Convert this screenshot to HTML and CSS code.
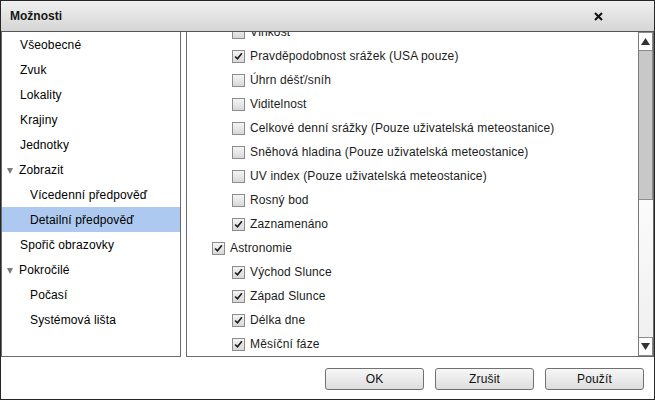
FILE: index.html
```html
<!DOCTYPE html>
<html>
<head>
<meta charset="utf-8">
<link rel="stylesheet" href="styles.css">
</head>
<body>
<div class="window">
  <div class="titlebar">
    <span class="title">Možnosti</span>
    <svg class="close" width="9" height="9" viewBox="0 0 9 9"><path d="M1 1L8 8M8 1L1 8" stroke="#111" stroke-width="2" fill="none"/></svg>
  </div>
  <div class="main">
    <div class="nav">
      <div class="nav-item">Všeobecné</div>
      <div class="nav-item">Zvuk</div>
      <div class="nav-item">Lokality</div>
      <div class="nav-item">Krajiny</div>
      <div class="nav-item">Jednotky</div>
      <div class="nav-item group"><span class="tri"></span>Zobrazit</div>
      <div class="nav-item child">Vícedenní předpověď</div>
      <div class="nav-item child selected">Detailní předpověď</div>
      <div class="nav-item">Spořič obrazovky</div>
      <div class="nav-item group"><span class="tri"></span>Pokročilé</div>
      <div class="nav-item child">Počasí</div>
      <div class="nav-item child">Systémová lišta</div>
    </div>
    <div class="content">
      <div class="list">
        <div class="row sub first"><span class="cb"></span>Vlhkost</div>
        <div class="row sub"><span class="cb on"><svg viewBox="0 0 13 13"><path d="M2.5 6.5L5.3 9.3L10.5 2.8"/></svg></span>Pravděpodobnost srážek (USA pouze)</div>
        <div class="row sub"><span class="cb"></span>Úhrn déšť/sníh</div>
        <div class="row sub"><span class="cb"></span>Viditelnost</div>
        <div class="row sub"><span class="cb"></span>Celkové denní srážky (Pouze uživatelská meteostanice)</div>
        <div class="row sub"><span class="cb"></span>Sněhová hladina (Pouze uživatelská meteostanice)</div>
        <div class="row sub"><span class="cb"></span>UV index (Pouze uživatelská meteostanice)</div>
        <div class="row sub"><span class="cb"></span>Rosný bod</div>
        <div class="row sub"><span class="cb on"><svg viewBox="0 0 13 13"><path d="M2.5 6.5L5.3 9.3L10.5 2.8"/></svg></span>Zaznamenáno</div>
        <div class="row top"><span class="cb on"><svg viewBox="0 0 13 13"><path d="M2.5 6.5L5.3 9.3L10.5 2.8"/></svg></span>Astronomie</div>
        <div class="row sub"><span class="cb on"><svg viewBox="0 0 13 13"><path d="M2.5 6.5L5.3 9.3L10.5 2.8"/></svg></span>Východ Slunce</div>
        <div class="row sub"><span class="cb on"><svg viewBox="0 0 13 13"><path d="M2.5 6.5L5.3 9.3L10.5 2.8"/></svg></span>Západ Slunce</div>
        <div class="row sub"><span class="cb on"><svg viewBox="0 0 13 13"><path d="M2.5 6.5L5.3 9.3L10.5 2.8"/></svg></span>Délka dne</div>
        <div class="row sub"><span class="cb on"><svg viewBox="0 0 13 13"><path d="M2.5 6.5L5.3 9.3L10.5 2.8"/></svg></span>Měsíční fáze</div>
      </div>
      <div class="scrollbar">
        <div class="sb-btn"><svg width="9" height="7" viewBox="0 0 9 7"><path d="M4.5 0L9 7H0Z" fill="#333"/></svg></div>
        <div class="sb-thumb"></div>
        <div class="sb-track"></div>
        <div class="sb-btn"><svg width="9" height="7" viewBox="0 0 9 7"><path d="M0 0H9L4.5 7Z" fill="#333"/></svg></div>
      </div>
    </div>
  </div>
  <div class="footer">
    <button class="btn">OK</button>
    <button class="btn">Zrušit</button>
    <button class="btn">Použít</button>
  </div>
</div>
</body>
</html>
```
FILE: styles.css
```css
* { box-sizing: border-box; }
body {
  margin: 0;
  font-family: "Liberation Sans", Arial, sans-serif;
  font-size: 12px;
  color: #000;
  background: #fff;
  letter-spacing: 0.13px;
}
.window {
  width: 655px;
  height: 400px;
  border: 1px solid #262626;
  display: flex;
  flex-direction: column;
  background: #fff;
  overflow: hidden;
}
.titlebar {
  height: 31px;
  flex: none;
  border-bottom: 1px solid #555;
  background: linear-gradient(#f0f0f0, #d5d5d5);
  display: flex;
  align-items: center;
  justify-content: space-between;
  padding: 0 51px 0 9px;
}
.title {
  font-weight: bold;
  font-size: 12px;
  color: #151515;
  letter-spacing: 0;
}
.close { display: block; }
.main {
  height: 325px;
  flex: none;
  display: flex;
  gap: 5px;
}
.nav {
  width: 180px;
  flex: none;
  border: 1px solid #6a6a6a;
  border-top: 0;
}
.nav-item {
  height: 25px;
  line-height: 26px;
  padding-left: 18px;
  white-space: nowrap;
}
.nav-item.group {
  padding-left: 5px;
  display: flex;
  align-items: center;
  padding-top: 1px;
}
.tri {
  width: 0;
  height: 0;
  border-left: 3.5px solid transparent;
  border-right: 3.5px solid transparent;
  border-top: 6px solid #7b7b7b;
  margin-right: 6px;
  margin-top: 1px;
}
.nav-item.child { padding-left: 28px; }
.nav-item.selected { background: #adc9ef; }
.content {
  flex: 1;
  display: flex;
  border: 1px solid #6a6a6a;
  border-top: 0;
  min-width: 0;
}
.list {
  flex: 1;
  overflow: hidden;
  color: #1c1c1c;
}
.row {
  height: 24px;
  display: flex;
  align-items: center;
  white-space: nowrap;
}
.row.first { margin-top: -12px; }
.row.sub { padding-left: 45px; }
.row.top { padding-left: 25px; }
.cb {
  width: 13px;
  height: 13px;
  flex: none;
  border: 1px solid #8c8c8c;
  background: linear-gradient(#f5f5f5, #d8d8d8);
  margin-right: 5px;
  display: flex;
}
.cb svg {
  width: 11px;
  height: 11px;
}
.cb svg path {
  fill: none;
  stroke: #1a1a1a;
  stroke-width: 1.9;
}
.scrollbar {
  width: 15px;
  flex: none;
  display: flex;
  flex-direction: column;
  border-left: 1px solid #7a7a7a;
}
.sb-btn {
  height: 19px;
  flex: none;
  background: #fff;
  border: 1px solid #8a8a8a;
  border-left: 0;
  display: flex;
  align-items: center;
  justify-content: center;
}
.sb-thumb {
  height: 149px;
  flex: none;
  background: #c8c8c8;
  border: 1px solid #8e8e8e;
  border-left: 0;
  border-top: 0;
}
.sb-track {
  flex: 1;
  background: linear-gradient(#fbfbfb, #f0f0f0);
}
.footer {
  flex: 1;
  display: flex;
  justify-content: flex-end;
  align-items: flex-start;
  gap: 11px;
  padding: 11px 10px 0 0;
}
.btn {
  width: 99px;
  height: 22px;
  border: 1px solid #707070;
  border-radius: 3px;
  background: linear-gradient(#f7f7f7, #dddddd);
  font-family: "Liberation Sans", Arial, sans-serif;
  font-size: 12px;
  color: #111;
  padding: 0;
  letter-spacing: 0.13px;
}
```
